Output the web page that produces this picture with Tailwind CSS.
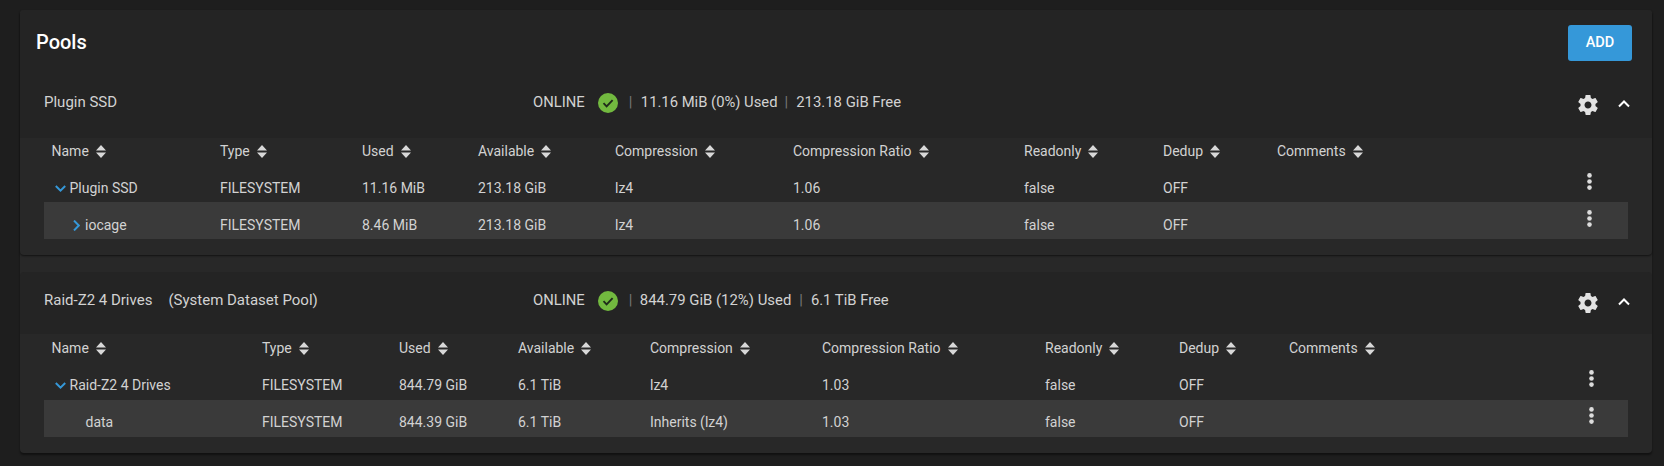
<!DOCTYPE html>
<html><head><meta charset="utf-8"><script src="https://cdn.jsdelivr.net/npm/@tailwindcss/browser@4"></script></head>
<body class="bg-[#1e1e1e] h-[466px] overflow-hidden font-['Roboto',sans-serif] text-[14px] text-[#d2d2d2]">
<svg class="hidden"><defs>
<symbol id="sort" viewBox="0 0 10 13"><path d="M5 0 10 5.5H0ZM5 13 0 7.5H10Z" fill="#d8d8d8"/></symbol>
<symbol id="gear" viewBox="0 0 24 24"><path fill="#e2e2e2" fill-rule="evenodd" d="M19.43 12.98c.04-.32.07-.64.07-.98s-.03-.66-.07-.98l2.11-1.65c.19-.15.24-.42.12-.64l-2-3.46c-.12-.22-.39-.3-.61-.22l-2.49 1c-.52-.4-1.08-.73-1.69-.98l-.38-2.65C14.46 2.18 14.25 2 14 2h-4c-.25 0-.46.18-.49.42l-.38 2.65c-.61.25-1.17.59-1.69.98l-2.49-1c-.23-.09-.49 0-.61.22l-2 3.46c-.13.22-.07.49.12.64l2.11 1.65c-.04.32-.07.65-.07.98s.03.66.07.98l-2.11 1.65c-.19.15-.24.42-.12.64l2 3.46c.12.22.39.3.61.22l2.49-1c.52.4 1.08.73 1.69.98l.38 2.65c.03.24.24.42.49.42h4c.25 0 .46-.18.49-.42l.38-2.65c.61-.25 1.17-.59 1.69-.98l2.49 1c.23.09.49 0 .61-.22l2-3.46c.12-.22.07-.49-.12-.64l-2.11-1.65zM12 15.5c-1.93 0-3.5-1.57-3.5-3.5s1.57-3.5 3.5-3.5 3.5 1.57 3.5 3.5-1.57 3.5-3.5 3.5z"/></symbol>
<symbol id="check" viewBox="0 0 20 20"><circle cx="10" cy="10" r="10" fill="#72b93f"/><path d="M5.5 10.2 8.6 13.3 14.6 7.2" fill="none" stroke="#1f2a1a" stroke-width="1.9"/></symbol>
<symbol id="up" viewBox="0 0 12 8"><path d="M1 6.5 6 1.5 11 6.5" fill="none" stroke="#fff" stroke-width="2"/></symbol>
<symbol id="down" viewBox="0 0 11 7"><path d="M.8 1 5.5 5.6 10.2 1" fill="none" stroke="#3598d9" stroke-width="2"/></symbol>
<symbol id="right" viewBox="0 0 7 11"><path d="M1 .6 5.8 5.5 1 10.4" fill="none" stroke="#3598d9" stroke-width="2"/></symbol>
<symbol id="kebab" viewBox="0 0 5 17"><circle cx="2.5" cy="2.4" r="2.3" fill="#dcdcdc"/><circle cx="2.5" cy="8.5" r="2.3" fill="#dcdcdc"/><circle cx="2.5" cy="14.6" r="2.3" fill="#dcdcdc"/></symbol>
</defs></svg>
<div class="pt-[10px] pl-[20px] w-[1652px]">
<div class="w-[1632px] rounded bg-[#282828] shadow-[0_2px_2px_rgba(0,0,0,0.45)]">

<section class="rounded bg-[#282828] shadow-[0_1px_2px_rgba(0,0,0,0.55)]">
  <div class="bg-[#242424] rounded-t">
    <div class="h-[66px] flex justify-between pl-[16px] pr-[20px] pt-[15px]">
      <h1 class="text-[20px] leading-[34px] font-medium text-white">Pools</h1>
      <button class="w-[64px] h-[36px] rounded-[3px] bg-[#3598d9] text-white text-[14.5px] font-medium">ADD</button>
    </div>
    <div class="h-[62px] flex items-center pl-[24px] text-[14.8px] pb-[10px]">
      <div class="w-[489px] text-[15px]">Plugin SSD</div>
      <div class="flex items-center w-[1040.5px]">
        <span>ONLINE</span>
        <svg class="w-[20px] h-[20px] ml-[13.5px] mr-[10.5px] mt-[2px]"><use href="#check"/></svg>
        <span class="text-[#777] mr-[8.5px]">|</span><span>11.16 MiB (0%) Used</span>
        <span class="text-[#777] ml-[7px] mr-[8px]">|</span><span class="text-[14.9px]">213.18 GiB Free</span>
      </div>
      <svg class="w-[24px] h-[24px] mt-[5px] ml-[2.5px]"><use href="#gear"/></svg>
      <svg class="w-[12px] h-[8px] ml-[18px] mt-[4px]"><use href="#up"/></svg>
    </div>
  </div>
  <div class="ml-[24px] mr-[24px] pb-[16px]">
    <div class="h-[27px] grid grid-cols-[168.5px_142px_116px_137px_178px_231px_139px_114px_1fr] pl-[7.5px] items-center">
      <div class="flex items-center gap-[7px]">Name<svg class="w-[10px] h-[13px]"><use href="#sort"/></svg></div>
      <div class="flex items-center gap-[7px]">Type<svg class="w-[10px] h-[13px]"><use href="#sort"/></svg></div>
      <div class="flex items-center gap-[7px]">Used<svg class="w-[10px] h-[13px]"><use href="#sort"/></svg></div>
      <div class="flex items-center gap-[7px]">Available<svg class="w-[10px] h-[13px]"><use href="#sort"/></svg></div>
      <div class="flex items-center gap-[7px]">Compression<svg class="w-[10px] h-[13px]"><use href="#sort"/></svg></div>
      <div class="flex items-center gap-[7px]">Compression Ratio<svg class="w-[10px] h-[13px]"><use href="#sort"/></svg></div>
      <div class="flex items-center gap-[7px]">Readonly<svg class="w-[10px] h-[13px]"><use href="#sort"/></svg></div>
      <div class="flex items-center gap-[7px]">Dedup<svg class="w-[10px] h-[13px]"><use href="#sort"/></svg></div>
      <div class="flex items-center gap-[7px]">Comments<svg class="w-[10px] h-[13px]"><use href="#sort"/></svg></div>
    </div>
    <div class="h-[37px] grid grid-cols-[168.5px_142px_116px_137px_178px_231px_139px_114px_1fr] pl-[7.5px] items-center pt-[10px]">
      <div class="flex items-center pl-[3.5px]"><svg class="w-[11px] h-[7px] mr-[3.5px]"><use href="#down"/></svg>Plugin SSD</div>
      <div>FILESYSTEM</div><div>11.16 MiB</div><div>213.18 GiB</div><div>lz4</div><div>1.06</div><div>false</div><div>OFF</div>
      <div class="flex justify-end pr-[36px] -mt-[14px]"><svg class="w-[5px] h-[17px]"><use href="#kebab"/></svg></div>
    </div>
    <div class="h-[37px] grid grid-cols-[168.5px_142px_116px_137px_178px_231px_139px_114px_1fr] pl-[7.5px] items-center pt-[10px] bg-[#3a3a3a]">
      <div class="flex items-center pl-[21px]"><svg class="w-[7px] h-[11px] mr-[5.5px]"><use href="#right"/></svg>iocage</div>
      <div>FILESYSTEM</div><div>8.46 MiB</div><div>213.18 GiB</div><div>lz4</div><div>1.06</div><div>false</div><div>OFF</div>
      <div class="flex justify-end pr-[36px] -mt-[14px]"><svg class="w-[5px] h-[17px]"><use href="#kebab"/></svg></div>
    </div>
  </div>
</section>

<section class="mt-[17px] rounded-b">
  <div class="bg-[#242424] h-[62px] flex items-center pl-[24px] text-[14.8px] pb-[6px] rounded-t">
    <div class="w-[489px] text-[15px]">Raid-Z2 4 Drives<span class="ml-[16px]">(System Dataset Pool)</span></div>
    <div class="flex items-center w-[1040.5px]">
      <span>ONLINE</span>
      <svg class="w-[20px] h-[20px] ml-[13.5px] mr-[10.5px] mt-[2px]"><use href="#check"/></svg>
      <span class="text-[#777] mr-[7.5px]">|</span><span class="text-[14.9px]">844.79 GiB (12%) Used</span>
      <span class="text-[#777] ml-[8px] mr-[8px]">|</span><span>6.1 TiB Free</span>
    </div>
    <svg class="w-[24px] h-[24px] mt-[5px] ml-[2.5px]"><use href="#gear"/></svg>
    <svg class="w-[12px] h-[8px] ml-[18px] mt-[4px]"><use href="#up"/></svg>
  </div>
  <div class="ml-[24px] mr-[24px] pb-[16px]">
    <div class="h-[29px] grid grid-cols-[210.5px_137px_119px_132px_172px_223px_134px_110px_1fr] pl-[7.5px] items-center">
      <div class="flex items-center gap-[7px]">Name<svg class="w-[10px] h-[13px]"><use href="#sort"/></svg></div>
      <div class="flex items-center gap-[7px]">Type<svg class="w-[10px] h-[13px]"><use href="#sort"/></svg></div>
      <div class="flex items-center gap-[7px]">Used<svg class="w-[10px] h-[13px]"><use href="#sort"/></svg></div>
      <div class="flex items-center gap-[7px]">Available<svg class="w-[10px] h-[13px]"><use href="#sort"/></svg></div>
      <div class="flex items-center gap-[7px]">Compression<svg class="w-[10px] h-[13px]"><use href="#sort"/></svg></div>
      <div class="flex items-center gap-[7px]">Compression Ratio<svg class="w-[10px] h-[13px]"><use href="#sort"/></svg></div>
      <div class="flex items-center gap-[7px]">Readonly<svg class="w-[10px] h-[13px]"><use href="#sort"/></svg></div>
      <div class="flex items-center gap-[7px]">Dedup<svg class="w-[10px] h-[13px]"><use href="#sort"/></svg></div>
      <div class="flex items-center gap-[7px]">Comments<svg class="w-[10px] h-[13px]"><use href="#sort"/></svg></div>
    </div>
    <div class="h-[37px] grid grid-cols-[210.5px_137px_119px_132px_172px_223px_134px_110px_1fr] pl-[7.5px] items-center pt-[8px]">
      <div class="flex items-center pl-[3.5px]"><svg class="w-[11px] h-[7px] mr-[3.5px]"><use href="#down"/></svg>Raid-Z2 4 Drives</div>
      <div>FILESYSTEM</div><div>844.79 GiB</div><div>6.1 TiB</div><div>lz4</div><div>1.03</div><div>false</div><div>OFF</div>
      <div class="flex justify-end pr-[34px] -mt-[14px]"><svg class="w-[5px] h-[17px]"><use href="#kebab"/></svg></div>
    </div>
    <div class="h-[37px] grid grid-cols-[210.5px_137px_119px_132px_172px_223px_134px_110px_1fr] pl-[7.5px] items-center pt-[8px] bg-[#3a3a3a]">
      <div class="pl-[34px]">data</div>
      <div>FILESYSTEM</div><div>844.39 GiB</div><div>6.1 TiB</div><div>Inherits (lz4)</div><div>1.03</div><div>false</div><div>OFF</div>
      <div class="flex justify-end pr-[34px] -mt-[14px]"><svg class="w-[5px] h-[17px]"><use href="#kebab"/></svg></div>
    </div>
  </div>
</section>
</div></div>
</body></html>
